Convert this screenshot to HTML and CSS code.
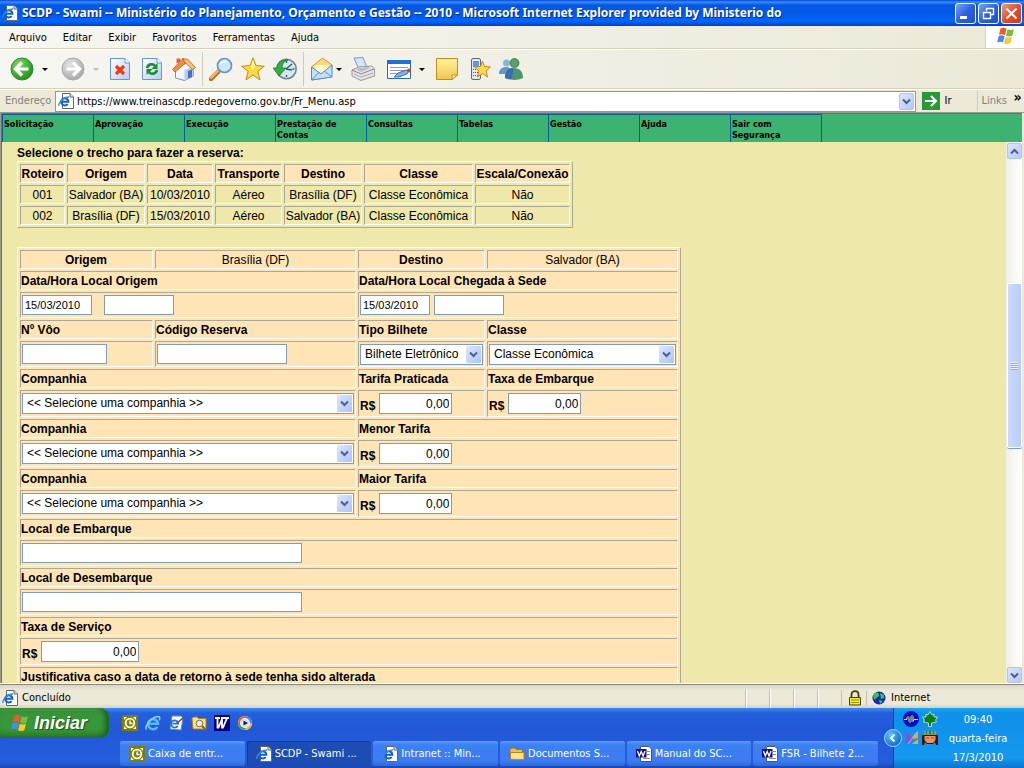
FILE: index.html
```html
<!DOCTYPE html>
<html lang="pt-BR">
<head>
<meta charset="utf-8">
<title>SCDP - Swami</title>
<link rel="stylesheet" href="styles.css">
</head>
<body>
<svg class="defs" aria-hidden="true">
  <defs>
    <linearGradient id="gPage" x1="0" y1="0" x2="1" y2="1"><stop offset="0" stop-color="#fff"/><stop offset="1" stop-color="#b5cdf8"/></linearGradient>
    <linearGradient id="gGold" x1="0" y1="0" x2="0" y2="1"><stop offset="0" stop-color="#fff3a0"/><stop offset="1" stop-color="#f4c44c"/></linearGradient>
    <radialGradient id="gGreen" cx=".35" cy=".3" r=".8"><stop offset="0" stop-color="#7edc5e"/><stop offset="1" stop-color="#188818"/></radialGradient>
    <radialGradient id="gGray" cx=".35" cy=".3" r=".8"><stop offset="0" stop-color="#e4e4e4"/><stop offset="1" stop-color="#a4a4a4"/></radialGradient>
    <radialGradient id="gBlue" cx=".35" cy=".3" r=".8"><stop offset="0" stop-color="#5cc4ff"/><stop offset="1" stop-color="#0a5cc8"/></radialGradient>
    <symbol id="e" viewBox="0 0 16 16">
      <path d="M12.300 11.800A5 5 0 1 1 13 8.700H4" fill="none" stroke="#58b8f8" stroke-width="2.600"/>
      <path d="M1.500 14.500C-1 11 7 1.500 13.500 1.500c2 .2 1.500 2.500.5 3.800" fill="none" stroke="#8cd0ff" stroke-width="1.400"/>
    </symbol>
    <symbol id="iepage" viewBox="0 0 16 16">
      <path d="M4.500.5H12L15.500 4V15.500H4.500z" fill="#fff" stroke="#666"/>
      <path d="M12 .5V4h3.500" fill="#ddd" stroke="#666"/>
      <path d="M9.700 11A3.600 3.600 0 1 1 10.400 8.700H3.500" fill="none" stroke="#1560c8" stroke-width="2"/>
      <path d="M1 13C-.5 10 6 3.800 11 4" fill="none" stroke="#2f8ee8" stroke-width="1.300"/>
    </symbol>
    <symbol id="flag" viewBox="0 0 20 18">
      <path d="M4.500 1.500c2-1 4-1 6 .3L9 8.200c-2-1.200-4-1.200-6-.2z" fill="#ee5a28"/>
      <path d="M11.500 2.300c2 1 4 1 6.500 0L16.300 8.700c-2 1-4.300 1-6.300 0z" fill="#7cbc3c"/>
      <path d="M2.700 9c2-1 4-1 6 .2L7.100 15.500c-2-1.100-4-1.100-6-.1z" fill="#4a8ae8"/>
      <path d="M9.700 9.800c2 1 4.200 1 6.300 0l-1.700 6.400c-2 1-4.200 1-6.300 0z" fill="#fcc832"/>
    </symbol>
    <symbol id="folder" viewBox="0 0 16 16">
      <path d="M1 3.500 2.500 2H6l1.500 1.500H13.500V6H15V13.500H1z" fill="#f0c040" stroke="#94701c"/>
      <path d="M1.500 13.300V6.500H15v7z" fill="#ffe48a" stroke="#b08820"/>
    </symbol>
    <symbol id="outlook" viewBox="0 0 16 16">
      <path fill="#808000" d="M0 0h16v16H0z"/>
      <circle cx="8" cy="8" r="4.300" fill="none" stroke="#fff" stroke-width="1.800"/>
      <path d="M8 5.500V8.500h2.500" fill="none" stroke="#fff" stroke-width="1.300"/>
      <path d="M2 2h3L2 5zM11 2h3v3zM2 11v3h3zM14 11v3h-3z" fill="#fff"/>
    </symbol>
    <symbol id="word" viewBox="0 0 16 16">
      <path fill="#fff" stroke="#555" d="M4.500.5H13L15.500 3v12.500h-11z"/>
      <path d="M11 5.500h3M11 8.500h3M7 12.500h7" stroke="#888"/>
      <path fill="#10108c" d="M0 3h10.500v8.500H0z"/>
      <path d="M1.500 5 3.300 10 5.200 5.500 7.100 10 9 5" fill="none" stroke="#fff" stroke-width="1.300"/>
    </symbol>
    <symbol id="star" viewBox="0 0 24 24">
      <path d="M12 .8 14.900 8.400 23.300 9.300 16.800 14.300 19 23 12 18 5 23 7.200 14.300.7 9.300 9.100 8.400z" fill="#ffd940" stroke="#c8881a"/>
      <path d="M12 2.500 14 9.300 12 13 10 9.500z" fill="#fff4a0"/>
    </symbol>
    <symbol id="arrow" viewBox="0 0 24 24"><path d="M18.500 12H6M12 5.500 5.500 12l6.500 6.500" fill="none" stroke="#fff" stroke-width="3.200"/></symbol>
  </defs>
</svg>

<header class="titlebar">
  <svg class="i16"><use href="#iepage"/></svg>
  <h1>SCDP - Swami -- Ministério do Planejamento, Orçamento e Gestão -- 2010 - Microsoft Internet Explorer provided by Ministerio do</h1>
  <div class="controls">
    <button aria-label="Minimizar"><svg viewBox="0 0 19 19"><path d="M4 13.500h7" stroke="#fff" stroke-width="3"/></svg></button>
    <button aria-label="Restaurar"><svg viewBox="0 0 19 19"><path d="M7.500 7V4.500h7v6H12M7 4.500h8M4.500 8.500h7v6h-7zM4 8.500h8" fill="none" stroke="#fff" stroke-width="1.400"/></svg></button>
    <button class="close" aria-label="Fechar"><svg viewBox="0 0 19 19"><path d="m4.500 4.500 10 10m0-10-10 10" stroke="#fff" stroke-width="2.200"/></svg></button>
  </div>
</header>

<div class="menubar">
  <nav>
    <a href="#">Arquivo</a><a href="#">Editar</a><a href="#">Exibir</a><a href="#">Favoritos</a><a href="#">Ferramentas</a><a href="#">Ajuda</a>
  </nav>
  <div class="throbber"><svg width="20" height="18"><use href="#flag"/></svg></div>
</div>

<div class="toolbar">
  <button class="drop" aria-label="Voltar"><svg viewBox="0 0 24 24"><circle cx="12" cy="12" r="11" fill="url(#gGreen)" stroke="#2c8c2c"/><use href="#arrow"/></svg></button>
  <button class="drop off" aria-label="Avançar"><svg viewBox="0 0 24 24"><circle cx="12" cy="12" r="11" fill="url(#gGray)" stroke="#aaa"/><use href="#arrow" transform="rotate(180 12 12)"/></svg></button>
  <button aria-label="Parar"><svg viewBox="0 0 24 24"><path d="M2.500 1.500H17L21.500 6v16.500h-19z" fill="url(#gPage)" stroke="#6c94d0"/><path d="M17 1.500V6h4.500" fill="#fff" stroke="#6c94d0"/><path d="m8 9 8 8m0-8-8 8" stroke="#f03c14" stroke-width="3.200"/></svg></button>
  <button aria-label="Atualizar"><svg viewBox="0 0 24 24"><path d="M2.500 1.500H17L21.500 6v16.500h-19z" fill="url(#gPage)" stroke="#6c94d0"/><path d="M17 1.500V6h4.500" fill="#fff" stroke="#6c94d0"/><path d="M7 11c1-4 6-5 8-2m2 4c-1 4-6 5-8 2" fill="none" stroke="#189028" stroke-width="2.600"/><path d="M17.500 6v6h-6zM6.500 18v-6h6z" fill="#189028"/></svg></button>
  <button aria-label="Página inicial"><svg viewBox="0 0 24 24"><path d="M3.500 12v9l9 2.500 9-4.500v-9L16 5z" fill="#f6f8ff" stroke="#7890c0"/><path d="M12.500 13v10.500l9-4.500v-9z" fill="#b8ccf4"/><path d="M16 21.500V14l4-1.500V20z" fill="#4c70b8"/><path d="M4.500 6.500v-5h4v3" fill="#e06038"/><path d="M10.500 1.500 16 2.500l7.500 8-3 2L11.500 4z" fill="#fcc070" stroke="#b86020" stroke-width=".8"/><path d="M.5 12.500 11 1.500l2 5L3 15z" fill="#f09040" stroke="#b86020" stroke-width=".8"/></svg></button>
  <i class="sep"></i>
  <button aria-label="Pesquisar"><svg viewBox="0 0 24 24"><path d="m2 22 7-7" stroke="#b87028" stroke-width="4.500" stroke-linecap="round"/><path d="m2 21 7-7" stroke="#f8bc70" stroke-width="2" stroke-linecap="round"/><circle cx="15.500" cy="8.500" r="7" fill="#cce8ff" stroke="#6890d0" stroke-width="1.700"/><path d="M10.500 8c1-4 6-5 8-3-3 0-6 1-8 3z" fill="#fff"/></svg></button>
  <button aria-label="Favoritos"><svg><use href="#star"/></svg></button>
  <button aria-label="Histórico"><svg viewBox="0 0 24 24"><circle cx="13.500" cy="12" r="9.700" fill="#d4e8f4" stroke="#708490" stroke-width="1.500"/><path d="M13.500 4v2m8 6h-2m-6 8v-2M13 12l6-5m-6 5 6 1" stroke="#40545c" stroke-width="1.400"/><path d="M4 11c0-6 6-9 11-8-4 1-6 4-6 8h4l-7 8-6-8z" fill="#36ac48" stroke="#1c7830" stroke-width=".8"/></svg></button>
  <i class="sep"></i>
  <button class="drop mail" aria-label="Correio"><svg viewBox="0 0 24 24"><path d="m1.500 10 11-9 9.500 7-1 12-19 3z" fill="#ffd878" stroke="#c89848"/><path d="M5 8h14l-2 8H6z" fill="#fff6d0"/><path d="m1.500 10 9.500 7L22 8v12L1.500 23z" fill="#c4e0ff" stroke="#5888cc"/><path d="m1.500 23 8-8m12.500 5-8-6" stroke="#5888cc"/></svg></button>
  <button aria-label="Imprimir"><svg viewBox="0 0 24 24"><path d="m3 1 9-.5 4 10-8 2z" fill="#d4e6ff" stroke="#8098c4"/><path d="m1 13 7-3 13-1 2.500 3v7L10 23.500 1 19z" fill="#e4e4e8" stroke="#999"/><path d="m1 13 9 4 13-5" fill="none" stroke="#888"/><path d="m3 17 7 3 12-4" fill="none" stroke="#aaa"/><path d="m5 12 12-2 2 1-9 4z" fill="#b8bcc4"/></svg></button>
  <button class="drop edit" aria-label="Editar"><svg viewBox="0 0 24 24"><path d="M.5 3.500h23v18H.5z" fill="#fff" stroke="#2868c0"/><path d="M0 3h24v4H0z" fill="#1c70d8"/><path d="M3 10.500h18M3 13.500h16M3 16.500h8" stroke="#99a"/><path d="m7 20 4-4 8-3 3 1-2 3-8 3z" fill="#80b0ec" stroke="#305890" stroke-width=".8"/><circle cx="22" cy="13.500" r="2" fill="#e43c20"/></svg></button>
  <button aria-label="Discutir"><svg viewBox="0 0 24 24"><path d="M1.500 1.500h21V18L17 22.500H1.500z" fill="url(#gGold)" stroke="#c09018"/><path d="M17 22.500V18h5.500z" fill="#fff0a0" stroke="#c09018"/></svg></button>
  <button aria-label="Celular"><svg viewBox="0 0 24 24"><rect x="4.500" y="1.500" width="9" height="21" rx="1.500" fill="#e4e8f0" stroke="#667"/><path d="M6 4h6v6H6z" fill="#48a0f0"/><path d="M6 12.500h6M6 15.500h6M6 18.500h6" stroke="#556" stroke-dasharray="1 1"/><path d="m15.500 4 2 5.500 6 .5-4.500 4 1.500 6-5-3.500-5 3.500 1.500-6L7.500 10l6-.5z" fill="#ffdc50" stroke="#d08018"/></svg></button>
  <button aria-label="Messenger"><svg viewBox="0 0 24 24"><circle cx="7.500" cy="6" r="3.500" fill="#80b8e0"/><path d="M0 17c0-5 3-7 7-7s6 2 6 7z" fill="#6098cc"/><circle cx="15.500" cy="6" r="4.500" fill="#58a068" stroke="#306040" stroke-width=".7"/><path d="M6 21c0-6 3-10 9-10 6 0 9 4 9 10-5 2.500-13 2.500-18 0z" fill="#4c986c"/><path d="M6 21c0-6 3-10 8-10 1 4-1 9-2 11.500z" fill="#3c6cb4"/></svg></button>
</div>

<form class="address">
  <label for="url">Endereço</label>
  <div class="urlbox">
    <svg class="i16"><use href="#iepage"/></svg>
    <input id="url" type="text" value="https://www.treinascdp.redegoverno.gov.br/Fr_Menu.asp">
    <button class="arrowbtn" type="button" aria-label="Abrir lista"><svg viewBox="0 0 9 7"><path d="m1 1.500 3.500 3.500L8 1.500"/></svg></button>
  </div>
  <button class="go" type="button"><svg viewBox="0 0 18 18"><path d="M0 0h18v18H0z" fill="#289838"/><path d="M3 9h11M9 4l5 5-5 5" fill="none" stroke="#fff" stroke-width="2"/></svg>Ir</button>
  <a class="links" href="#">Links</a><b class="more">»</b>
</form>

<div class="viewport">
  <nav class="sitenav">
    <a href="#">Solicitação</a><a href="#">Aprovação</a><a href="#">Execução</a><a href="#">Prestação de Contas</a><a href="#">Consultas</a><a href="#">Tabelas</a><a href="#">Gestão</a><a href="#">Ajuda</a><a href="#">Sair com Segurança</a>
  </nav>
  <div class="pane">
    <main>
      <h2>Selecione o trecho para fazer a reserva:</h2>
      <table class="trips">
        <colgroup><col class="w47"><col class="w80"><col class="w68"><col class="w69"><col class="w80"><col class="w111"><col class="w97"></colgroup>
        <tr><th>Roteiro</th><th>Origem</th><th>Data</th><th>Transporte</th><th>Destino</th><th>Classe</th><th>Escala/Conexão</th></tr>
        <tr><td>001</td><td>Salvador (BA)</td><td>10/03/2010</td><td>Aéreo</td><td>Brasília (DF)</td><td>Classe Econômica</td><td>Não</td></tr>
        <tr><td>002</td><td>Brasília (DF)</td><td>15/03/2010</td><td>Aéreo</td><td>Salvador (BA)</td><td>Classe Econômica</td><td>Não</td></tr>
      </table>
      <form>
      <table class="booking">
        <colgroup><col class="c1"><col class="c2"><col class="c3"><col class="c4"></colgroup>
        <tr class="head"><th>Origem</th><td>Brasília (DF)</td><th>Destino</th><td>Salvador (BA)</td></tr>
        <tr><th colspan="2"><label for="d1">Data/Hora Local Origem</label></th><th colspan="2"><label for="d2">Data/Hora Local Chegada à Sede</label></th></tr>
        <tr class="in"><td colspan="2"><div class="f gap12"><input id="d1" class="date" value="15/03/2010"><input class="date" aria-label="Hora de origem"></div></td><td colspan="2"><div class="f gap4"><input id="d2" class="date" value="15/03/2010"><input class="date" aria-label="Hora de chegada"></div></td></tr>
        <tr><th><label for="voo">Nº Vôo</label></th><th><label for="cod">Código Reserva</label></th><th><label for="tipo">Tipo Bilhete</label></th><th><label for="cls">Classe</label></th></tr>
        <tr class="in"><td><div class="f"><input id="voo" class="w85"></div></td><td><div class="f"><input id="cod" class="w130"></div></td><td><select id="tipo"><option>Bilhete Eletrônico</option></select></td><td><select id="cls"><option>Classe Econômica</option></select></td></tr>
        <tr><th colspan="2"><label for="co1">Companhia</label></th><th><label for="t1">Tarifa Praticada</label></th><th><label for="t2">Taxa de Embarque</label></th></tr>
        <tr class="in tall"><td colspan="2"><select id="co1"><option>&lt;&lt; Selecione uma companhia &gt;&gt;</option></select></td><td><div class="f gap4"><b>R$</b><input id="t1" class="money" value="0,00"></div></td><td><div class="f gap4"><b>R$</b><input id="t2" class="money" value="0,00"></div></td></tr>
        <tr><th colspan="2"><label for="co2">Companhia</label></th><th colspan="2"><label for="t3">Menor Tarifa</label></th></tr>
        <tr class="in tall"><td colspan="2"><select id="co2"><option>&lt;&lt; Selecione uma companhia &gt;&gt;</option></select></td><td colspan="2"><div class="f gap4"><b>R$</b><input id="t3" class="money" value="0,00"></div></td></tr>
        <tr><th colspan="2"><label for="co3">Companhia</label></th><th colspan="2"><label for="t4">Maior Tarifa</label></th></tr>
        <tr class="in tall"><td colspan="2"><select id="co3"><option>&lt;&lt; Selecione uma companhia &gt;&gt;</option></select></td><td colspan="2"><div class="f gap4"><b>R$</b><input id="t4" class="money" value="0,00"></div></td></tr>
        <tr><th colspan="4"><label for="emb">Local de Embarque</label></th></tr>
        <tr class="in"><td colspan="4"><div class="f"><input id="emb" class="w280"></div></td></tr>
        <tr><th colspan="4"><label for="des">Local de Desembarque</label></th></tr>
        <tr class="in"><td colspan="4"><div class="f"><input id="des" class="w280"></div></td></tr>
        <tr><th colspan="4"><label for="srv">Taxa de Serviço</label></th></tr>
        <tr class="in tall"><td colspan="4"><div class="f gap4"><b>R$</b><input id="srv" class="money w98" value="0,00"></div></td></tr>
        <tr><th colspan="4">Justificativa caso a data de retorno à sede tenha sido alterada</th></tr>
      </table>
      </form>
    </main>
    <div class="scroll">
      <button class="arrowbtn" aria-label="Rolar para cima"><svg viewBox="0 0 9 7"><path d="M1 5.500 4.500 2 8 5.500"/></svg></button>
      <div class="track"><div class="thumb"><i></i></div></div>
      <button class="arrowbtn" aria-label="Rolar para baixo"><svg viewBox="0 0 9 7"><path d="m1 1.500 3.500 3.500L8 1.500"/></svg></button>
    </div>
  </div>
</div>

<div class="status">
  <svg class="i16"><use href="#iepage"/></svg><span class="msg">Concluído</span>
  <i></i><i></i><i></i><i></i>
  <span class="lock"><svg width="14" height="16" viewBox="0 0 14 16"><path d="M3.500 8V4.500C3.500 0 10.500 0 10.500 4.500V8" fill="none" stroke="#444400" stroke-width="1.800"/><path d="M1.500 7.500h11v7.500h-11z" fill="#f0e838" stroke="#444400"/><path d="M3 10h8m-8 2.500h8" stroke="#999900"/></svg></span>
  <span class="zone"><svg width="14" height="14" viewBox="0 0 14 14"><circle cx="7" cy="7" r="6.500" fill="#1828b0"/><path d="M2 3c3-3 5-1 5 1S4 6 3 9C1 7 1 5 2 3zM8 2l4 2v3L9 8zM7 9l4 1-3 3z" fill="#30c850"/></svg>Internet</span>
</div>

<footer class="taskbar">
  <div class="left">
    <div class="top">
      <button class="start"><svg width="20" height="18"><use href="#flag"/></svg>Iniciar</button>
      <div class="quick">
        <a href="#" aria-label="Outlook"><svg class="i16"><use href="#outlook"/></svg></a>
        <a href="#" aria-label="Internet Explorer"><svg class="i16"><use href="#e"/></svg></a>
        <a href="#" aria-label="Mostrar área de trabalho"><svg class="i16" viewBox="0 0 16 16"><path d="M4 1h9l2 2-2 12-11-1z" fill="#fff" stroke="#5090d0"/><path d="M9.700 11A3.600 3.600 0 1 1 10.300 8.700H4.500" fill="none" stroke="#2070d0" stroke-width="1.800"/><path d="m9 8 6-5" stroke="#804020" stroke-width="1.600"/></svg></a>
        <a href="#" aria-label="Explorar"><svg class="i16" viewBox="0 0 16 16"><path d="M1 3.500 2.500 2H6l1.500 1.500H15V14H2z" fill="#ffe080" stroke="#b08020"/><circle cx="8.500" cy="8.500" r="3.300" fill="#d8f0ff" stroke="#807040"/><path d="m11 11 3.500 3.500" stroke="#a06020" stroke-width="2"/></svg></a>
        <a href="#" aria-label="Word"><svg class="i16" viewBox="0 0 16 16"><path fill="#00007c" d="M0 0h16v16H0z"/><path d="M1 3h5M7 3h4M11 3h4M3.500 3v9.500h1L8 4v8.500h1L13 3" fill="none" stroke="#fff" stroke-width="1.800"/></svg></a>
        <a href="#" aria-label="Media Player"><svg class="i16" viewBox="0 0 16 16"><circle cx="8" cy="8" r="7" fill="#fff"/><path d="M8 2a6 6 0 0 0-6 6" stroke="#f06020" stroke-width="2" fill="none"/><path d="M8 2a6 6 0 0 1 6 6" stroke="#4080e0" stroke-width="2" fill="none"/><path d="M2 8a6 6 0 0 0 6 6" stroke="#40a040" stroke-width="2" fill="none"/><path d="M14 8a6 6 0 0 1-6 6" stroke="#f0b820" stroke-width="2" fill="none"/><circle cx="8" cy="8" r="4.500" fill="#d8e4f4"/><path d="M6.500 5.500v5L11 8z" fill="#102060"/></svg></a>
      </div>
    </div>
    <div class="tasks">
      <button><svg class="i16"><use href="#outlook"/></svg>Caixa de entr...</button>
      <button class="on"><svg class="i16"><use href="#iepage"/></svg>SCDP - Swami ...</button>
      <button><svg class="i16"><use href="#iepage"/></svg>Intranet :: Min...</button>
      <button><svg class="i16"><use href="#folder"/></svg>Documentos S...</button>
      <button><svg class="i16"><use href="#word"/></svg>Manual do SC...</button>
      <button><svg class="i16"><use href="#word"/></svg>FSR - Bilhete 2...</button>
    </div>
  </div>
  <div class="tray">
    <button class="chev" aria-label="Mostrar ícones ocultos"><svg viewBox="0 0 18 18"><circle cx="9" cy="9" r="8.500" fill="url(#gBlue)" stroke="#9cd4ff"/><path d="m10.500 5.500-3.500 3.500 3.500 3.500" fill="none" stroke="#fff" stroke-width="2"/></svg></button>
    <div class="icons">
      <svg class="i16" viewBox="0 0 16 16"><circle cx="8" cy="8" r="8" fill="#0010c8"/><path d="M1 8.500h3V6.500l1-1 1 1v4l1 1 1-1v-5l1-1 1 1v5l1-2h4" fill="none" stroke="#f8f040"/></svg>
      <svg class="i16" viewBox="0 0 16 16"><path d="M8 .5 10 4l2-1v3h3.500L13.500 9l1 2-5 1v3.500h-3V12l-5-1 1-2L.5 6H4V3l2 1z" fill="#088018" stroke="#d0f0d8" stroke-width=".8"/></svg>
      <svg class="i16" viewBox="0 0 16 16"><path d="M1 2c4 1 7 3 8 6-2 3-5 5-8 6l3-6z" fill="#8a50d8"/><path d="M15 1 9 7l2 2 4-1zM9 14l6-5v5z" fill="#f8a030"/><path d="m5 14 9-12" stroke="#c8a0ff"/></svg>
      <svg class="i16" viewBox="0 0 16 16"><path d="M0 5h16v10h-2l-1-3-2 2H5l-2-2-1 3H0z" fill="#301808"/><path d="M2 1h12v3.500H2z" fill="#388038"/><path d="M3 1v4m3-4v4m4-4v4m3-4v4" stroke="#f0c030"/><path d="M2.500 6h11v4L11 13H5l-2.500-3z" fill="#f0905c"/><path d="M4 8h3m2 0h3" stroke="#a05030"/></svg>
    </div>
    <div class="clock"><span>09:40</span><span>quarta-feira</span><span>17/3/2010</span></div>
  </div>
</footer>
</body>
</html>
```
FILE: styles.css
```css
* { box-sizing: border-box; }
body {
  margin: 0;
  height: 100vh;
  display: flex;
  flex-direction: column;
  overflow: hidden;
  background: #ece9d8;
  color: #000;
  font: 11px/14px "DejaVu Sans Condensed", "DejaVu Sans", sans-serif;
}
button, input, select { font: inherit; color: inherit; margin: 0; }
button { padding: 0; border: 0; background: none; white-space: nowrap; }
a { color: inherit; text-decoration: none; }
svg { display: block; flex: none; }
.defs { position: absolute; width: 0; height: 0; }
.i16 { width: 16px; height: 16px; }

.titlebar {
  flex: none;
  height: 26px;
  display: flex;
  align-items: center;
  gap: 4px;
  padding: 0 2px;
  background: linear-gradient(#0048d8, #3a8cf8 2px, #0458e4 5px, #0458e8 14px, #0068fc 21px, #0040c8);
}
.titlebar h1 {
  flex: 1;
  margin: 0;
  color: #fff;
  font: bold 12px/20px "Noto Sans", sans-serif;
  white-space: nowrap;
  text-shadow: 1px 1px #002c90;
}
.controls { display: flex; gap: 2px; }
.controls button {
  width: 21px;
  height: 21px;
  border: 1px solid #fff;
  border-radius: 3px;
  background: linear-gradient(135deg, #7ca4f4, #2c60e0 50%, #1c50d0);
}
.controls .close { background: linear-gradient(135deg, #f09a80, #e0502c 50%, #c83c14); }

.menubar {
  flex: none;
  display: flex;
  height: 23px;
  background: linear-gradient(90deg, #f6f6f2, #ece9d8);
  border-bottom: 1px solid #d8d2bd;
}
.menubar nav { flex: 1; display: flex; gap: 16px; padding: 5px 9px 0; }
.throbber {
  width: 39px;
  padding: 1px 10px;
  background: #fff;
  border-left: 1px solid #d8d2bd;
}

.toolbar {
  flex: none;
  height: 40px;
  display: flex;
  align-items: center;
  gap: 8px;
  padding: 0 10px;
  background: linear-gradient(90deg, #f6f6f2, #ece9d8);
  border-top: 1px solid #fff;
  border-bottom: 1px solid #d8d2bd;
}
.toolbar svg { width: 24px; height: 24px; }
.toolbar .drop { display: flex; align-items: center; gap: 8px; width: 43px; }
.toolbar .off { width: 39px; }
.toolbar .mail { width: 33px; gap: 2px; }
.toolbar .edit { width: 40px; margin-left: 4px; }
.drop::after {
  content: "";
  border: 3px solid transparent;
  border-top-color: #000;
  border-bottom: 0;
}
.drop.off::after { border-top-color: #bbb; }
.toolbar .sep { width: 1px; height: 34px; margin: 0 -2px; background: #d0cbb4; }

.address {
  flex: none;
  height: 24px;
  display: flex;
  align-items: center;
  padding-left: 5px;
  border-top: 1px solid #fff;
  border-bottom: 1px solid #9c9a8c;
}
.address label { width: 50px; color: #858277; }
.urlbox {
  flex: 1;
  height: 21px;
  display: flex;
  align-items: center;
  gap: 3px;
  padding: 0 1px 0 2px;
  background: #fff;
  border: 1px solid #7f9db9;
}
.urlbox input { flex: 1; border: 0; padding: 2px 0 0; outline: 0; }
.arrowbtn {
  flex: none;
  width: 15px;
  height: 17px;
  display: grid;
  place-items: center;
  border: 1px solid #b0c4f0;
  border-radius: 2px;
  background: linear-gradient(135deg, #dce6fe, #b4c8f8);
}
.arrowbtn svg { width: 9px; height: 7px; }
.arrowbtn path { fill: none; stroke: #4d6185; stroke-width: 2; }
.go { display: flex; align-items: center; gap: 5px; width: 55px; margin-left: 6px; }
.go svg { width: 18px; height: 18px; }
.links { padding: 3px 4px; color: #858277; border-left: 1px solid #d0cbb4; }
.more { width: 13px; align-self: start; font-size: 14px; text-align: center; }

.viewport {
  flex: 1;
  min-height: 0;
  display: flex;
  flex-direction: column;
  border-left: 1px solid #9c9a8c;
  border-right: 2px solid #ece9d8;
  box-shadow: inset 1px 0 #716f64;
  padding-left: 1px;
}
.sitenav {
  flex: none;
  display: flex;
  height: 29px;
  background: #3cb371;
  border-top: 1px solid #716f64;
}
.sitenav a {
  flex: 0 0 91px;
  padding: 4px 1px;
  border-top: 1px solid #0060a0;
  border-right: 1px solid #0060a0;
  font: bold 9px/11px "DejaVu Sans Condensed", sans-serif;
}
.sitenav a:first-child { flex-basis: 92px; border-left: 1px solid #0060a0; }
.pane { flex: 1; min-height: 0; display: flex; }
main {
  flex: 1;
  overflow: hidden;
  padding: 4px 0 0 15px;
  background: #eee8aa;
  font: 12px/15px "Liberation Sans", Arial, sans-serif;
}
h2 { margin: 0; font-size: 12px; line-height: 15px; }

table { border-collapse: separate; border-spacing: 2px; table-layout: fixed; }
th, td { padding: 2px 1px 0; border: 1px solid; border-color: #aca899 #fff #fff #aca899; }
table { border: 1px solid; border-color: #fff #aca899 #aca899 #fff; }
th { background: #ffe4b5; }
.trips { width: 556px; }
.trips th, .trips td { padding: 2px 0 0; text-align: center; white-space: nowrap; }
.w47 { width: 45px; }
.w80 { width: 78px; }
.w68 { width: 66px; }
.w69 { width: 67px; }
.w111 { width: 109px; }
.w97 { width: 95px; }

.booking { width: 664px; margin-top: 19px; background: #ffe4b5; }
.booking .c1 { width: 133px; }
.booking .c2 { width: 201px; }
.booking .c3 { width: 127px; }
.booking th { padding-left: 0; text-align: left; }
.booking .head th, .booking .head td { text-align: center; }
.booking .in td { height: 26px; padding: 1px; }
.booking .tall td { height: 27px; }
.f { display: flex; align-items: center; }
.gap4 { gap: 4px; }
.gap12 { gap: 12px; }
.f b { align-self: end; }
.booking input {
  width: 73px;
  height: 20px;
  padding: 0 2px;
  border: 1px solid #7f9db9;
  background: #fff;
}
.booking .date { width: 70px; font-size: 11px; }
.booking .money { height: 21px; text-align: right; }
.booking .w85 { width: 85px; }
.booking .w98 { width: 98px; }
.booking .w130 { width: 130px; }
.booking .w280 { width: 280px; }
select {
  display: block;
  width: 100%;
  height: 21px;
  padding: 0 18px 0 4px;
  border: 1px solid #7f9db9;
  border-radius: 0;
  appearance: none;
  background: #fff url("data:image/svg+xml,%3Csvg xmlns='http://www.w3.org/2000/svg' width='15' height='17'%3E%3ClinearGradient id='g' x2='1' y2='1'%3E%3Cstop stop-color='%23dce6fe'/%3E%3Cstop offset='1' stop-color='%23aec4f8'/%3E%3C/linearGradient%3E%3Crect width='15' height='17' rx='1' fill='url(%23g)'/%3E%3Cpath d='m4 6.500 3.500 3.500L11 6.500' fill='none' stroke='%234d6185' stroke-width='2'/%3E%3C/svg%3E") no-repeat right 1px center;
}

.scroll {
  flex: none;
  width: 16px;
  display: flex;
  flex-direction: column;
  background: linear-gradient(90deg, #f0f0ea, #fefefb);
}
.scroll .arrowbtn { width: 15px; height: 16px; margin: 1px 0 0 1px; }
.track { flex: 1; display: flex; flex-direction: column; padding-left: 1px; }
.track::before { content: ""; flex: 124; }
.track::after { content: ""; flex: 218; }
.thumb {
  flex: 164;
  display: grid;
  place-items: center;
  border: 1px solid #fff;
  border-radius: 2px;
  background: linear-gradient(90deg, #ccdafe, #b8ccfa);
  box-shadow: 0 1px #7c9cd8;
}
.thumb i { width: 7px; height: 8px; background: repeating-linear-gradient(#eef4fe 0 1px, #8caae8 1px 2px); }

.status {
  flex: none;
  height: 25px;
  display: flex;
  align-items: center;
  padding: 3px 0 0 2px;
  border-top: 1px solid #fff;
  background: linear-gradient(#8c8a7c 1px, #d8d4c4 1px, #ece9d8 6px, #ece9d8 20px, #d4d0c0);
}
.msg { flex: 1; padding-left: 4px; }
.status i { width: 24px; height: 18px; border-left: 1px solid #c4c0ac; box-shadow: inset 1px 0 #fff; }
.lock { width: 25px; padding-left: 6px; border-left: 1px solid #c4c0ac; }
.zone { width: 158px; display: flex; align-items: center; gap: 5px; padding-left: 5px; border-left: 1px solid #c4c0ac; }

.taskbar {
  flex: none;
  height: 60px;
  display: flex;
  background: linear-gradient(#3c8cf0, #2460dc 5px, #2258d8 20px, #245edc 54px, #1c46ac);
  color: #fff;
}
.left { flex: 1; min-width: 0; }
.top { display: flex; align-items: center; gap: 13px; height: 30px; }
.start {
  width: 109px;
  height: 30px;
  display: flex;
  align-items: center;
  gap: 4px;
  padding-left: 10px;
  border-radius: 0 9px 9px 0;
  background: linear-gradient(#5cac5c, #389438 4px, #389838 20px, #2c7c2c);
  box-shadow: inset -4px 0 5px #1c6420;
  font: italic bold 18px/24px "Liberation Sans", Arial, sans-serif;
  text-shadow: 1px 1px 1px #1c4c1c;
}
.quick { display: flex; gap: 7px; }
.tasks { display: flex; gap: 2px; padding: 3px 15px 0 120px; }
.tasks button {
  flex: 1 1 0;
  min-width: 0;
  height: 25px;
  display: flex;
  align-items: center;
  gap: 3px;
  padding-left: 9px;
  border-radius: 2px;
  background: linear-gradient(#5c9cfc, #3c80f4 4px, #3c7cf0 20px, #2c68dc);
  overflow: hidden;
}
.tasks .on { background: #1c4cb4; box-shadow: inset 1px 1px #143c8c; }
.tray {
  width: 131px;
  display: flex;
  align-items: center;
  background: linear-gradient(#18a8f0, #1090e8 5px, #1498f0 50px, #0c74cc);
  border-left: 1px solid #103c90;
}
.chev { width: 18px; height: 18px; margin: 0 1px 0 -10px; }
.icons { display: grid; grid-template-columns: 16px 16px; gap: 3px; align-self: start; padding-top: 3px; }
.clock { flex: 1; display: flex; flex-direction: column; gap: 5px; padding: 2px 6px 0 0; text-align: center; }
```
